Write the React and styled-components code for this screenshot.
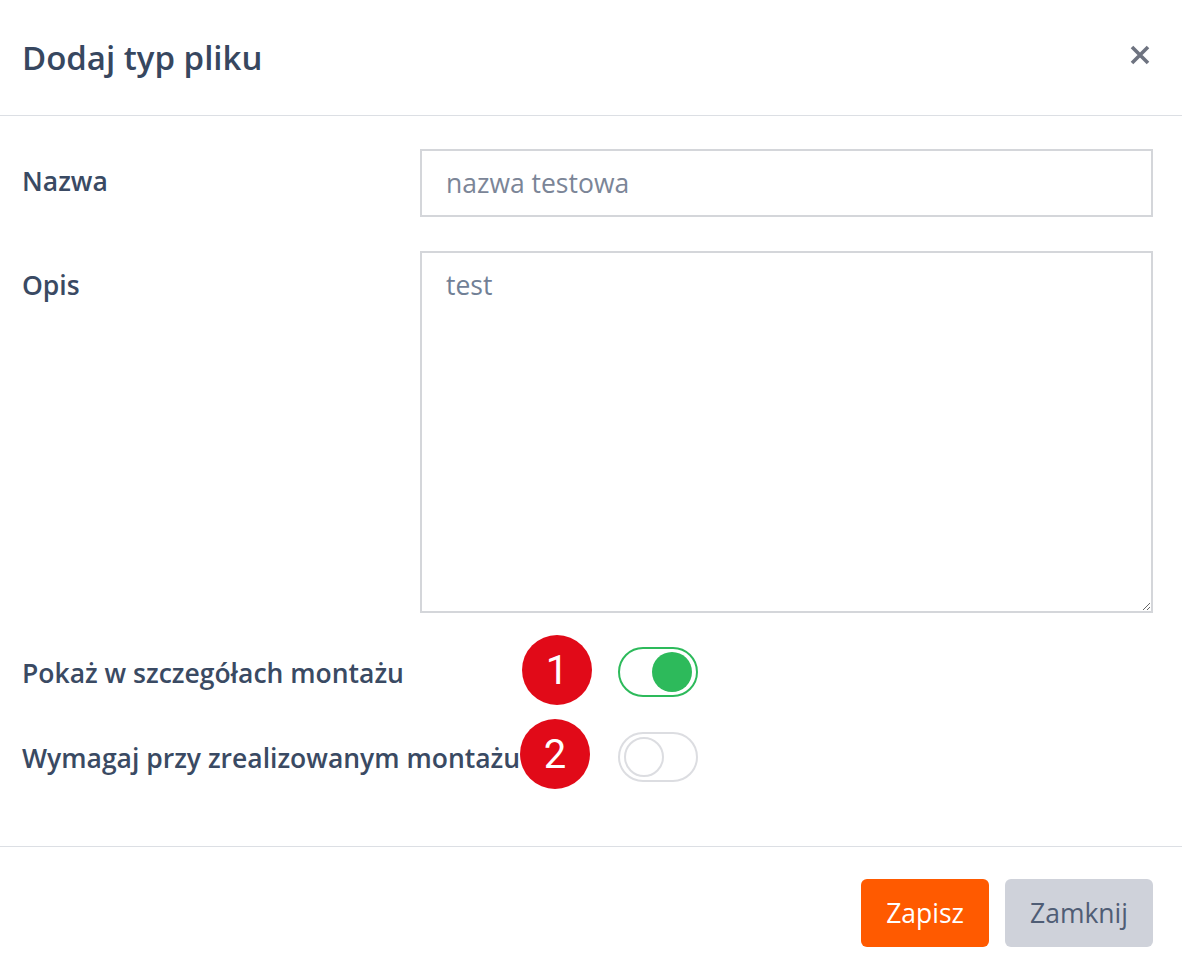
import React from "react";
import styled, { createGlobalStyle } from "styled-components";

const Global = createGlobalStyle`
  html, body { margin: 0; padding: 0; background: #fff; }
  body { font-family: "Open Sans", "Noto Sans", sans-serif; }
  * { box-sizing: border-box; }
`;

const Modal = styled.div`
  width: 1182px;
  min-height: 977px;
  background: #fff;
  display: flex;
  flex-direction: column;
`;

const Header = styled.div`
  height: 116px;
  padding: 0 30px 0 22px;
  display: flex;
  align-items: center;
  justify-content: space-between;
  border-bottom: 1px solid #dcdfe4;
`;

const Title = styled.h1`
  margin: 0;
  font-size: 33px;
  font-weight: 600;
  color: #37475f;
  line-height: 1;
`;

const CloseButton = styled.button`
  border: 0;
  background: none;
  padding: 0;
  width: 24px;
  height: 24px;
  display: flex;
  align-items: center;
  justify-content: center;
  cursor: pointer;
  margin-top: -6px;
`;

const Body = styled.div`
  padding: 33px 29px 0 22px;
  display: flex;
  flex-direction: column;
`;

const FieldRow = styled.div`
  display: grid;
  grid-template-columns: 398px 1fr;
  margin-bottom: 34px;
`;

const Label = styled.label`
  font-size: 26.5px;
  font-weight: 600;
  color: #3a4a63;
  padding-top: ${(p) => p.$top || 0}px;
  line-height: 1.4;
`;

const TextInput = styled.input`
  height: 68px;
  border: 2px solid #d4d6da;
  padding: 0 24px;
  font-family: inherit;
  font-size: 26.5px;
  color: #718096;
  outline: none;
  &::placeholder { color: #7b8597; }
`;

const TextArea = styled.textarea`
  height: 362px;
  border: 2px solid #d4d6da;
  padding: 14px 24px;
  font-family: inherit;
  font-size: 26.5px;
  line-height: 1.4;
  color: #718096;
  outline: none;
  resize: vertical;
`;

const ToggleRow = styled.div`
  display: flex;
  align-items: center;
  height: 50px;
  margin-bottom: ${(p) => p.$mb || 0}px;
`;

const ToggleLabel = styled.span`
  width: 596px;
  flex: none;
  font-size: 26.5px;
  font-weight: 600;
  color: #3a4a63;
  white-space: nowrap;
  padding-top: 2px;
`;

const SwitchWrap = styled.div`
  position: relative;
`;

const Switch = styled.div`
  width: 80px;
  height: 50px;
  border-radius: 25px;
  border: 2px solid ${(p) => (p.$on ? "#2dba5b" : "#dcdde1")};
  background: #fff;
  display: flex;
  align-items: center;
  justify-content: ${(p) => (p.$on ? "flex-end" : "flex-start")};
  padding: 0 4px;
`;

const Knob = styled.div`
  width: 40px;
  height: 40px;
  border-radius: 50%;
  background: ${(p) => (p.$on ? "#2dba5b" : "#fff")};
  border: ${(p) => (p.$on ? "none" : "2px solid #dcdde1")};
`;

const Badge = styled.div`
  position: absolute;
  left: ${(p) => p.$left}px;
  top: 50%;
  margin-top: ${(p) => p.$mt}px;
  width: 70px;
  height: 70px;
  border-radius: 50%;
  background: #e10a18;
  color: #fff;
  font-family: Roboto, "Liberation Sans", sans-serif;
  font-size: 40px;
  font-weight: 400;
  display: flex;
  align-items: center;
  justify-content: center;
`;

const Footer = styled.div`
  margin-top: 64px;
  border-top: 1px solid #dcdfe4;
  padding: 32px 29px 30px 0;
  display: flex;
  justify-content: flex-end;
  gap: 16px;
`;

const Button = styled.button`
  height: 68px;
  padding: 0 25px;
  border: 0;
  border-radius: 6px;
  font-family: inherit;
  font-size: 26.5px;
  background: ${(p) => (p.$primary ? "#ff5a00" : "#cfd2da")};
  color: ${(p) => (p.$primary ? "#fff" : "#4f5d75")};
  cursor: pointer;
`;

export default function App() {
  return (
    <>
      <Global />
      <Modal>
        <Header>
          <Title>Dodaj typ pliku</Title>
          <CloseButton aria-label="Zamknij">
            <svg width="22" height="22" viewBox="0 0 22 22">
              <path d="M3 3 L19 19 M19 3 L3 19" stroke="#6e7380" strokeWidth="3.6" strokeLinecap="butt" />
            </svg>
          </CloseButton>
        </Header>
        <Body>
          <FieldRow>
            <Label $top={14}>Nazwa</Label>
            <TextInput placeholder="nazwa testowa" />
          </FieldRow>
          <FieldRow>
            <Label $top={16}>Opis</Label>
            <TextArea defaultValue="test" />
          </FieldRow>
          <ToggleRow $mb={35}>
            <ToggleLabel>Pokaż w szczegółach montażu</ToggleLabel>
            <SwitchWrap>
              <Badge $left={-96} $mt={-37}>1</Badge>
              <Switch $on>
                <Knob $on />
              </Switch>
            </SwitchWrap>
          </ToggleRow>
          <ToggleRow>
            <ToggleLabel>Wymagaj przy zrealizowanym montażu</ToggleLabel>
            <SwitchWrap>
              <Badge $left={-98} $mt={-38}>2</Badge>
              <Switch>
                <Knob />
              </Switch>
            </SwitchWrap>
          </ToggleRow>
        </Body>
        <Footer>
          <Button $primary>Zapisz</Button>
          <Button>Zamknij</Button>
        </Footer>
      </Modal>
    </>
  );
}
